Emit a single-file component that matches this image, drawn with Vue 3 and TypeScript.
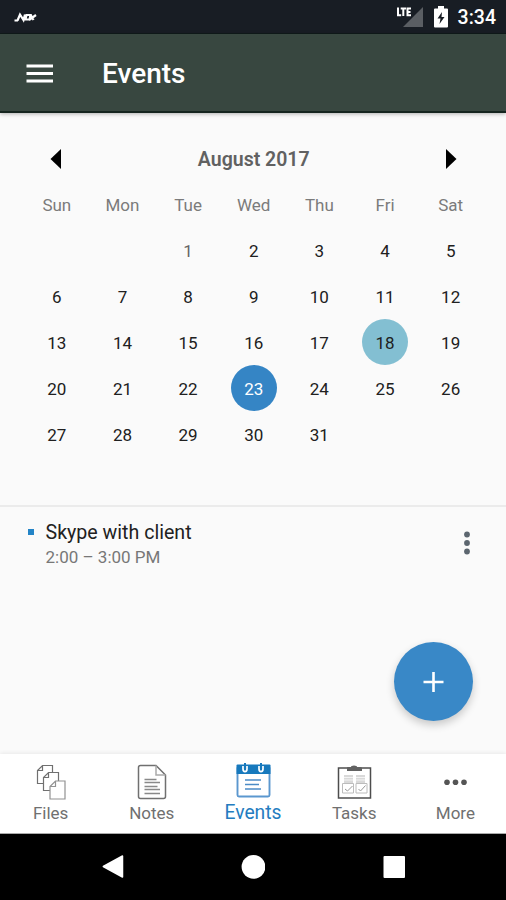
<script setup lang="ts">
interface DayCell {
  key: number
  label: string
  state: '' | 'muted' | 'today' | 'selected'
}

const weekdays: string[] = ['Sun', 'Mon', 'Tue', 'Wed', 'Thu', 'Fri', 'Sat']
const firstWeekday = 2
const daysInMonth = 31

function stateOf(day: number): DayCell['state'] {
  if (day === 1) return 'muted'
  if (day === 18) return 'today'
  if (day === 23) return 'selected'
  return ''
}

const cells: DayCell[] = Array.from({ length: 35 }, (_, i) => {
  const day = i - firstWeekday + 1
  const valid = day >= 1 && day <= daysInMonth
  return { key: i, label: valid ? String(day) : '', state: valid ? stateOf(day) : '' }
})
</script>

<template>
  <div class="screen">
    <header class="status">
      <svg class="nox" width="24" height="12" viewBox="0 0 24 12">
        <path d="M.5 9.500H4 M3.500 9.500 6 3.500 9.500 9 11 3.500 M11.500 8.500 12.500 4H16.500L15.500 8.500H11.500Z M16.500 3.500 19.500 9 M22 4 15 9" fill="none" stroke="#fff" stroke-width="2.200" />
      </svg>
      <div class="status-icons">
        <svg width="28" height="24" viewBox="0 0 28 24">
          <path d="M27 2V22H7Z" fill="#5a5e63" />
          <path d="M2 2.500V10.300H5.200 M4.700 3.500H10 M7.300 3.500V11 M15 3.500H11.500V10.300H15 M11.500 7H14.500" fill="none" stroke="#fff" stroke-width="2" />
        </svg>
        <svg class="battery" width="14" height="22" viewBox="0 0 14 22">
          <path d="M4 0H10V2.500H13Q14 2.500 14 3.500V20.500Q14 21.500 13 21.500H1Q0 21.500 0 20.500V3.500Q0 2.500 1 2.500H4Z" fill="#fff" />
          <path d="M8 6 3.500 12.500H6.500L5.500 18 10.500 11H7.500Z" fill="#181d24" />
        </svg>
        <span class="clock">3:34</span>
      </div>
    </header>

    <div class="toolbar">
      <svg class="menu" width="28" height="22" viewBox="0 0 28 22">
        <path d="M.5 3H27M.5 10.500H27M.5 18H27" stroke="#fff" stroke-width="3" />
      </svg>
      <h1>Events</h1>
    </div>

    <section class="calendar">
      <div class="month">
        <svg width="12" height="20" viewBox="0 0 12 20"><path d="M11 0V20L.5 10Z" /></svg>
        <span>August 2017</span>
        <svg width="12" height="20" viewBox="0 0 12 20"><path d="M1 0V20L11.500 10Z" /></svg>
      </div>
      <div class="grid weekdays">
        <span v-for="name in weekdays" :key="name">{{ name }}</span>
      </div>
      <div class="grid days">
        <div v-for="cell in cells" :key="cell.key" class="cell">
          <span class="day" :class="cell.state">{{ cell.label }}</span>
        </div>
      </div>
    </section>

    <main class="agenda">
      <div class="event">
        <i class="marker"></i>
        <div class="event-text">
          <div class="event-title">Skype with client</div>
          <div class="event-time">2:00 – 3:00 PM</div>
        </div>
        <svg class="kebab" width="8" height="26" viewBox="0 0 8 26" fill="#5c666f">
          <circle cx="4" cy="4.500" r="2.900" /><circle cx="4" cy="13" r="2.900" /><circle cx="4" cy="21.500" r="2.900" />
        </svg>
      </div>
      <button class="fab" type="button" aria-label="Add event">
        <svg width="22" height="22" viewBox="0 0 22 22"><path d="M10.500 1V21M.5 11H20.500" stroke="#fff" stroke-width="2.600" /></svg>
      </button>
    </main>

    <nav class="tabs">
      <div class="tab">
        <svg width="36" height="40" viewBox="0 0 36 40" fill="#fff" stroke="#707070" stroke-width="1.200">
          <path d="M9.500 3.500H19.500V21.500H4.500V8.500Z M9.500 3.500V8.500H4.500" />
          <path d="M15.500 10.500H25.500V28.500H10.500V15.500Z M15.500 10.500V15.500H10.500" />
          <path d="M22.500 19H32V37H17V24.500Z M22.500 19V24.500H17" stroke="#929292" />
        </svg>
        <span>Files</span>
      </div>
      <div class="tab">
        <svg width="36" height="40" viewBox="0 0 36 40" fill="none" stroke="#707070" stroke-width="1.500">
          <path d="M6.500 3.500H22L31.500 13V34.500Q31.500 36.500 29.500 36.500H6.500Q4.500 36.500 4.500 34.500V5.500Q4.500 3.500 6.500 3.500Z" />
          <path d="M22 3.500V13H31.500" stroke="#aaa" />
          <path d="M10.500 17.500H22.500M10.500 20.500H26M10.500 24.500H23.500M10.500 27.500H26M10.500 31.500H26" stroke="#898989" />
        </svg>
        <span>Notes</span>
      </div>
      <div class="tab active">
        <svg width="36" height="40" viewBox="0 0 36 40" fill="none">
          <rect x="2.500" y="4.500" width="32" height="30" rx="1.500" stroke="#5b97cf" stroke-width="1.900" />
          <path d="M1.500 3.500Q1.500 2.500 2.500 2.500H34.500Q35.500 2.500 35.500 3.500V12H1.500Z" fill="#1779bd" />
          <path d="M8 4V7C8 10.500 12 10.500 12 7V4M24 4V7C24 10.500 28 10.500 28 7V4" stroke="#fff" stroke-width="1.700" />
          <path d="M10 1V7M26 1V7" stroke="#1779bd" stroke-width="2" />
          <path d="M10 18H26M10 22.500H24M10 27H26" stroke="#4b8bc6" stroke-width="1.500" />
        </svg>
        <span>Events</span>
      </div>
      <div class="tab">
        <svg width="36" height="40" viewBox="0 0 36 40" fill="none">
          <rect x="2.500" y="6" width="32" height="30" stroke="#4d4d4d" stroke-width="1.500" />
          <path d="M11 9V6Q11 5 12 5H15Q15 3.500 18 3.500T21 5H24Q26 5 26 6V9Z" fill="#626262" />
          <path d="M8 13H17V21H8ZM20 13H29V21H20Z" fill="#d9d9d9" />
          <path d="M8 15.500H17M8 18H17M20 15.500H29M20 18H29" stroke="#f4f4f4" />
          <path d="M6.500 21.500H17.500V31H6.500ZM20 21.500H31V31H20Z" fill="#fff" stroke="#bcbcbc" />
          <path d="M9 27 11.500 29 16.500 24M22.500 27 24.500 29 29.500 23.500" stroke="#999" />
        </svg>
        <span>Tasks</span>
      </div>
      <div class="tab">
        <svg width="36" height="40" viewBox="0 0 36 40" fill="#555">
          <circle cx="10" cy="20.300" r="2.800" /><circle cx="18.500" cy="20.300" r="2.800" /><circle cx="27" cy="20.300" r="2.800" />
        </svg>
        <span>More</span>
      </div>
    </nav>

    <footer class="system">
      <svg width="24" height="26" viewBox="0 0 24 26"><path d="M3.300 12.500 22.500 2V23Z" fill="#fff" stroke="#fff" stroke-width="1.500" stroke-linejoin="round" /></svg>
      <svg width="24" height="26" viewBox="0 0 24 26"><circle cx="12.500" cy="12.800" r="11.900" fill="#fff" /></svg>
      <svg width="24" height="26" viewBox="0 0 24 26"><rect x="1.500" y="2" width="21.500" height="22" rx="1" fill="#fff" /></svg>
    </footer>
  </div>
</template>

<style>
body { margin: 0; background: #fafafa; }
</style>

<style scoped>
.screen {
  display: flex;
  flex-direction: column;
  width: 506px;
  height: 900px;
  overflow: hidden;
  background: #fafafa;
  font-family: Roboto, sans-serif;
}
.status {
  display: flex;
  justify-content: space-between;
  box-sizing: border-box;
  height: 34px;
  padding: 0 10px 0 14px;
  background: #181d24;
  border-bottom: 1px solid #101a1a;
}
.nox { margin-top: 11px; }
.status-icons { display: flex; padding-top: 5px; }
.battery { margin: 1px 10px 0 10px; }
.clock { color: #fff; font-size: 19.5px; line-height: 26px; font-weight: 500; }
.toolbar {
  display: flex;
  align-items: center;
  box-sizing: border-box;
  height: 79px;
  padding-left: 26px;
  background: #384740;
  border-bottom: 2px solid #15251f;
  box-shadow: 0 1px 4px rgba(0, 0, 0, .3);
}
.menu { margin-top: 2px; }
.toolbar h1 {
  margin: 3px 0 0 48px;
  color: #fff;
  font-size: 28px;
  font-weight: 500;
  line-height: 32px;
}
.calendar {
  box-sizing: border-box;
  height: 394px;
  padding: 23px 22.5px 0 24px;
  border-bottom: 2px solid #ebebeb;
}
.month {
  display: flex;
  align-items: center;
  justify-content: space-between;
  height: 46px;
  padding: 0 26px;
  color: #616161;
  font-size: 19.5px;
  font-weight: 600;
}
.month svg { fill: #000; }
.grid { display: grid; grid-template-columns: repeat(7, 1fr); text-align: center; }
.weekdays { height: 45px; line-height: 46px; font-size: 17px; color: #7b7b7b; }
.days { grid-auto-rows: 46px; font-size: 17px; color: #202020; }
.cell { display: flex; justify-content: center; }
.day { width: 46px; height: 46px; border-radius: 50%; line-height: 48px; }
.muted { color: #666; }
.today { background: #83bfd2; }
.selected { background: #3585c5; color: #fff; }
.agenda { position: relative; height: 247px; }
.event { display: flex; padding: 13px 35px 0 28px; }
.marker { width: 6px; height: 6px; margin-top: 9px; background: #2384c7; }
.event-text { flex: 1; margin-left: 11.5px; }
.event-title { font-size: 19.6px; line-height: 25px; color: #212121; }
.event-time { font-size: 17px; line-height: 25px; color: #777; }
.kebab { margin-top: 10px; }
.fab {
  position: absolute;
  right: 33px;
  bottom: 33px;
  display: flex;
  align-items: center;
  justify-content: center;
  width: 79px;
  height: 79px;
  padding: 0;
  border: 0;
  border-radius: 50%;
  background: #3988c7;
  box-shadow: 0 4px 8px rgba(0, 0, 0, .2);
}
.tabs {
  display: flex;
  box-sizing: border-box;
  height: 80px;
  padding-top: 8px;
  background: #fff;
  border-bottom: 1px solid #aaa;
  box-shadow: 0 -1px 4px rgba(0, 0, 0, .07);
}
.tab {
  flex: 1;
  display: flex;
  flex-direction: column;
  align-items: center;
  color: #707070;
  font-size: 17px;
  line-height: 22px;
}
.active { color: #247cc0; font-size: 19.3px; line-height: 21px; }
.system {
  display: flex;
  align-items: center;
  justify-content: center;
  gap: 117px;
  height: 66px;
  background: #000;
}
</style>
